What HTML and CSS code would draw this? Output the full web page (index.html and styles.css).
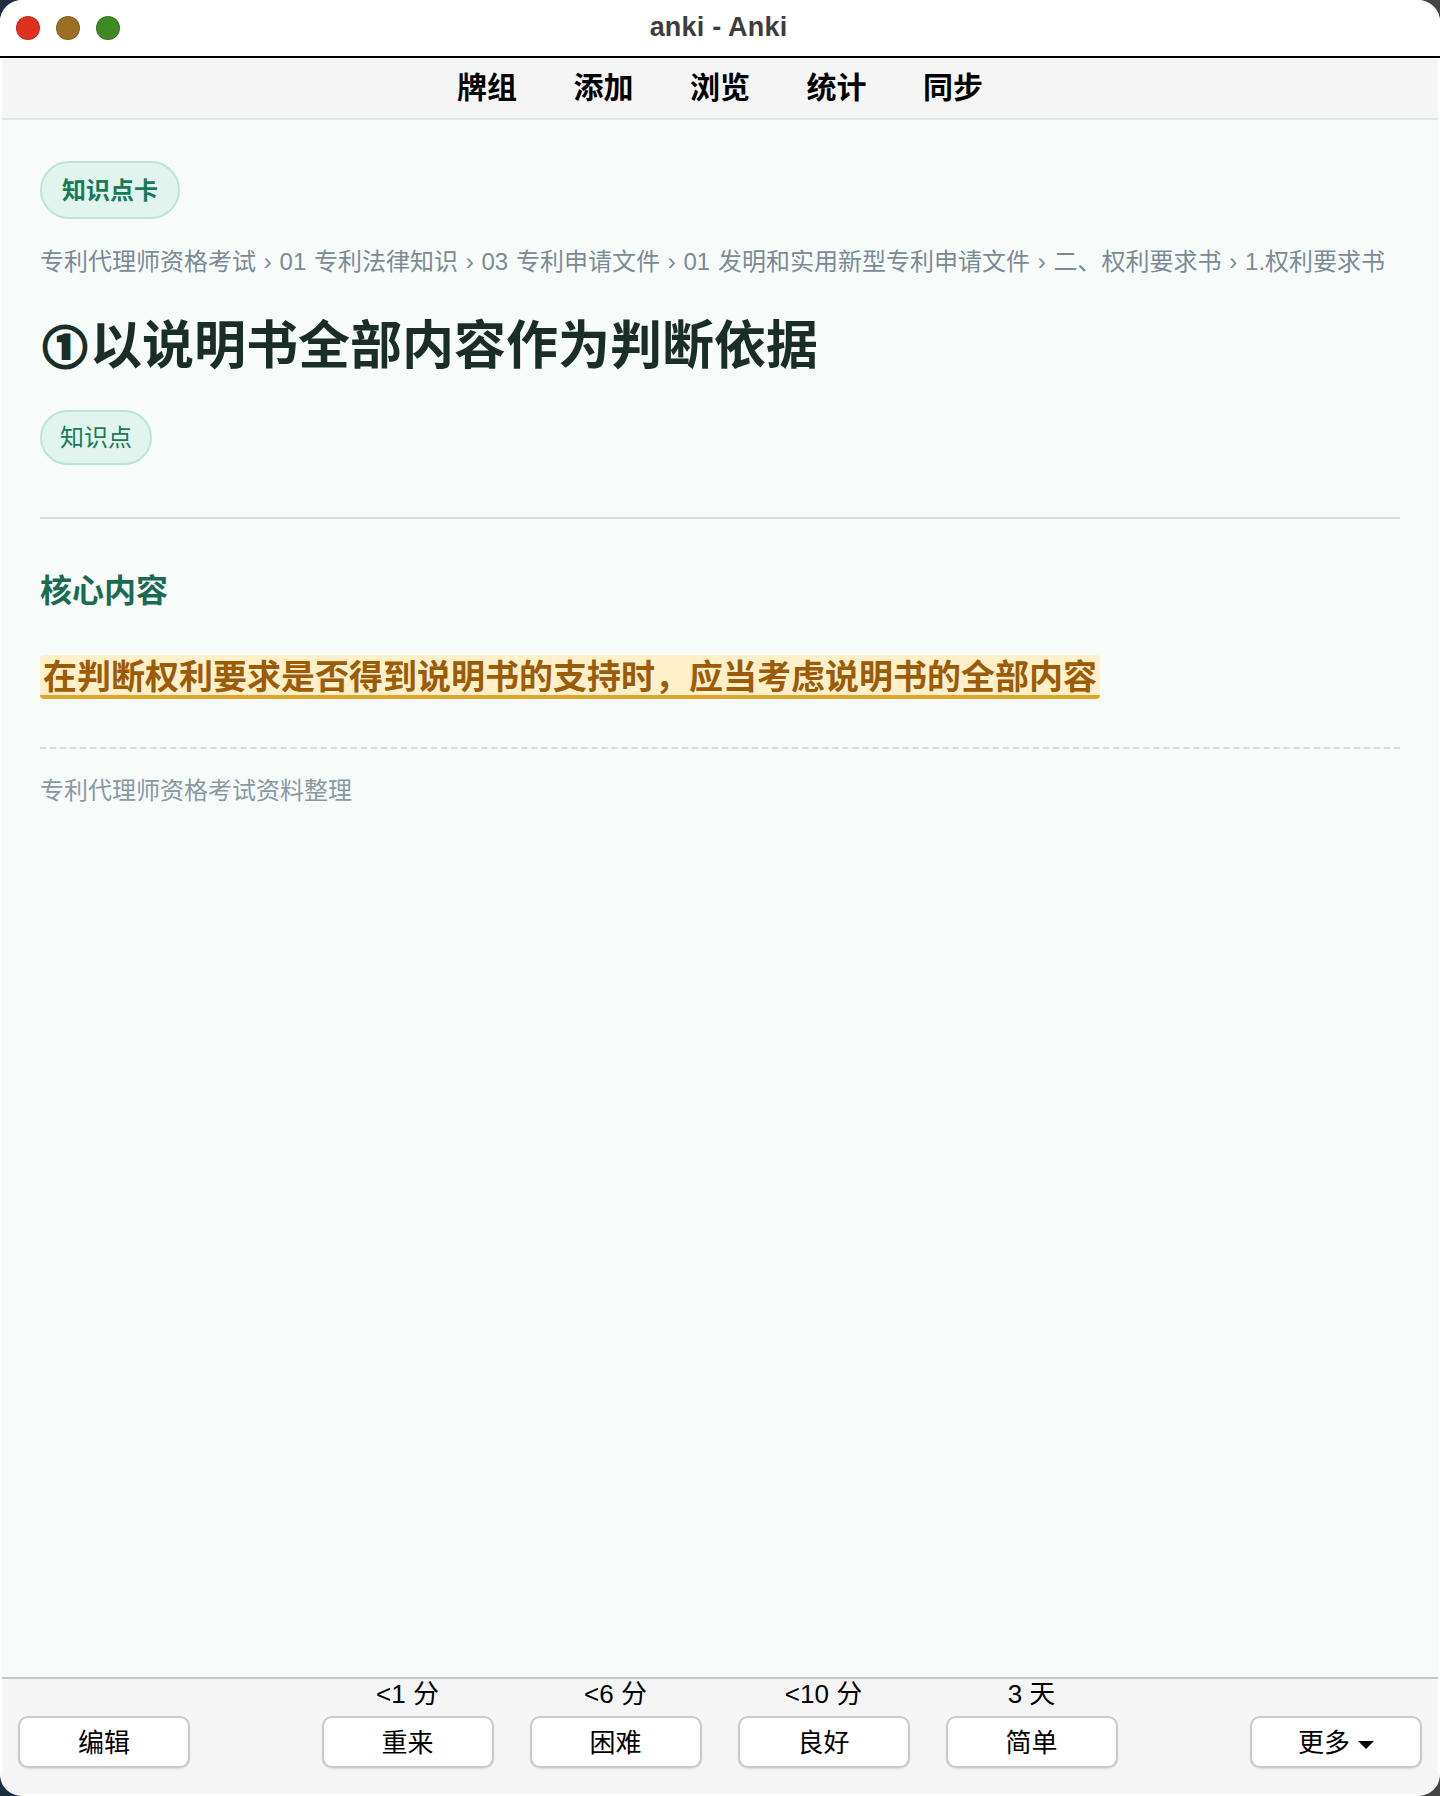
FILE: index.html
```html
<!DOCTYPE html>
<html lang="zh-CN">
<head>
    <meta charset="UTF-8">
    <meta name="viewport" content="width=device-width, initial-scale=1.0">
    <title>anki - Anki</title>
    <link rel="stylesheet" href="styles.css">
</head>
<body>
    <div class="window">
        <header class="titlebar">
            <div class="traffic-lights">
                <span class="light light-red"></span>
                <span class="light light-yellow"></span>
                <span class="light light-green"></span>
            </div>
            <div class="window-title">anki - Anki</div>
        </header>

        <nav class="toolbar">
            <a>牌组</a>
            <a>添加</a>
            <a>浏览</a>
            <a>统计</a>
            <a>同步</a>
        </nav>

        <main class="card">
            <div><span class="chip chip-strong">知识点卡</span></div>
            <div class="breadcrumb">专利代理师资格考试 › 01 专利法律知识 › 03 专利申请文件 › 01 发明和实用新型专利申请文件 › 二、权利要求书 › 1.权利要求书</div>
            <h1><span class="num">①</span>以说明书全部内容作为判断依据</h1>
            <div><span class="chip">知识点</span></div>
            <hr class="divider">
            <h2>核心内容</h2>
            <p class="core"><span class="highlight">在判断权利要求是否得到说明书的支持时，应当考虑说明书的全部内容</span></p>
            <div class="source">专利代理师资格考试资料整理</div>
        </main>

        <footer class="answer-bar">
            <div class="answer-slot slot-edit">
                <button>编辑</button>
            </div>
            <div class="answer-group">
                <div class="answer-slot"><span class="due">&lt;1 分</span><button>重来</button></div>
                <div class="answer-slot"><span class="due">&lt;6 分</span><button>困难</button></div>
                <div class="answer-slot"><span class="due">&lt;10 分</span><button>良好</button></div>
                <div class="answer-slot"><span class="due">3 天</span><button>简单</button></div>
            </div>
            <div class="answer-slot slot-more">
                <button>更多<span class="caret"></span></button>
            </div>
        </footer>
    </div>
</body>
</html>
```

FILE: styles.css
```css
* {
    margin: 0;
    padding: 0;
    box-sizing: border-box;
}

html, body {
    height: 100%;
}

body {
    background: linear-gradient(90deg, #1c2f40, #444);
    font-family: 'Liberation Sans', 'Noto Sans CJK SC', sans-serif;
    overflow: hidden;
}

.window {
    height: 1796px;
    display: flex;
    flex-direction: column;
    background: #fff;
    border-radius: 22px;
    overflow: hidden;
    padding: 0 2px 2px;
}

.titlebar {
    position: relative;
    height: 58px;
    flex-shrink: 0;
    background: #fff;
    border-bottom: 2px solid #000;
    margin: 0 -2px;
    padding: 0 3px 2px 0;
    display: flex;
    align-items: center;
    justify-content: center;
}

.traffic-lights {
    position: absolute;
    left: 16px;
    top: 16px;
    display: flex;
    gap: 16px;
}

.light {
    width: 24px;
    height: 24px;
    border-radius: 50%;
    border: 1px solid rgba(0, 0, 0, 0.15);
}

.light-red { background: #e0301e; }
.light-yellow { background: #9a6f22; }
.light-green { background: #3f8a24; }

.window-title {
    font-size: 27px;
    font-weight: 700;
    letter-spacing: 0.2px;
    color: #3d3d3d;
}

.toolbar {
    height: 62px;
    flex-shrink: 0;
    background: #f5f5f5;
    border-bottom: 2px solid #e4e4e4;
    padding-bottom: 6px;
    display: flex;
    align-items: center;
    justify-content: center;
    gap: 56.5px;
}

.toolbar a {
    font-size: 30px;
    font-weight: 700;
    color: #000;
}

.card {
    flex: 1;
    background: #f7fbfa;
    padding: 41px 38px 0;
    min-height: 0;
}

.chip {
    display: inline-block;
    height: 55px;
    line-height: 51px;
    padding: 0 18px;
    font-size: 24px;
    color: #177a5b;
    background: #e1f4ee;
    border: 2px solid #bde5d7;
    border-radius: 28px;
}

.chip-strong {
    height: 58px;
    line-height: 55px;
    font-weight: 700;
    border-radius: 29px;
    padding: 0 20px;
}

.breadcrumb {
    margin-top: 26px;
    font-size: 24px;
    line-height: 34px;
    word-spacing: 1.1px;
    color: #7b8a95;
    white-space: nowrap;
}

h1 {
    margin-top: 32px;
    font-size: 52px;
    line-height: 70px;
    font-weight: 700;
    color: #1a2e27;
}

h1 .num {
    display: inline-block;
    width: 50px;
    text-align: center;
    font-size: 44px;
    -webkit-text-stroke: 3px #1a2e27;
}

h1 + div {
    margin-top: 25.5px;
}

.divider {
    margin-top: 52px;
    border: none;
    border-top: 2px solid #d0dfda;
}

h2 {
    margin-top: 51px;
    font-size: 32px;
    line-height: 42px;
    font-weight: 700;
    color: #1a6b52;
}

.core {
    margin-top: 43px;
    padding-bottom: 48px;
    border-bottom: 2px dashed #d5dfdc;
    font-size: 34px;
    line-height: 44px;
    font-weight: 700;
}

.highlight {
    display: inline-block;
    padding: 0 3px;
    height: 44px;
    line-height: 45px;
    color: #9c5b06;
    background: #fff0c9;
    border-bottom: 4px solid #e0a52c;
    border-radius: 4px;
    white-space: nowrap;
}

.source {
    margin-top: 26px;
    font-size: 24px;
    line-height: 32px;
    color: #8a98a3;
}

.answer-bar {
    position: relative;
    height: 117px;
    flex-shrink: 0;
    background: #f5f5f5;
    border-top: 2px solid #c8c8c8;
    display: flex;
    justify-content: center;
}

.answer-group {
    display: flex;
    gap: 36px;
    margin-left: -1px;
}

.answer-slot {
    display: flex;
    flex-direction: column;
    align-items: center;
    width: 172px;
}

.slot-edit {
    position: absolute;
    left: 16px;
    bottom: 26px;
}

.slot-more {
    position: absolute;
    right: 16px;
    bottom: 26px;
}

.due {
    font-size: 26px;
    line-height: 28px;
    margin-top: 1px;
    margin-bottom: 8px;
    color: #000;
}

button {
    width: 172px;
    height: 52px;
    padding-bottom: 3px;
    font-family: inherit;
    font-size: 26px;
    color: #000;
    background: #fff;
    border: 2px solid #c9c9c9;
    border-radius: 10px;
    box-shadow: 0 1px 2px rgba(0, 0, 0, 0.1);
}

.caret {
    display: inline-block;
    margin-left: 8px;
    vertical-align: middle;
    border-left: 8px solid transparent;
    border-right: 8px solid transparent;
    border-top: 8px solid #000;
}
```
